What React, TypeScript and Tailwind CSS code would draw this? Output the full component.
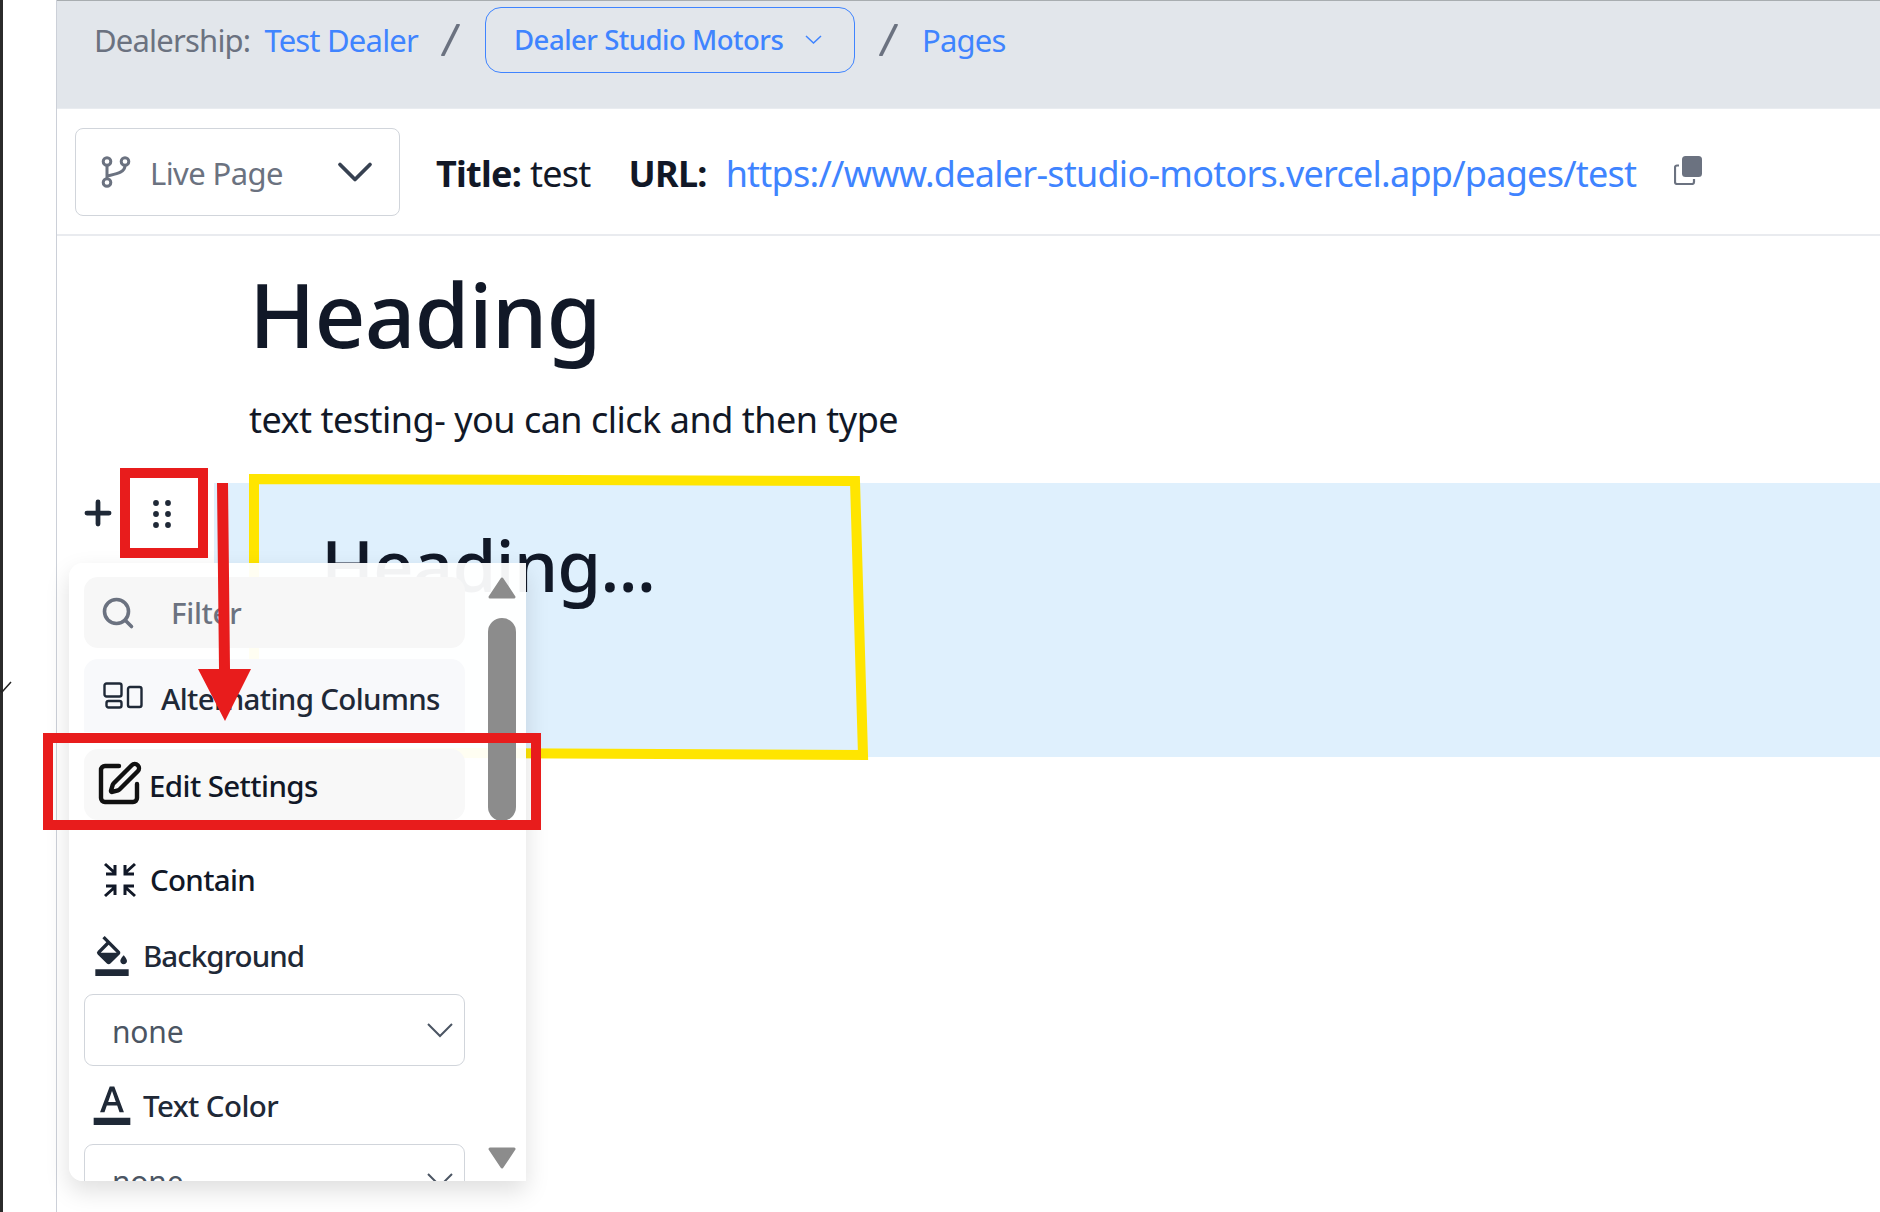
import { ChevronDown, Plus, Search, SquarePen } from "lucide-react";
import { MdFormatColorFill, MdFormatColorText } from "react-icons/md";

const font = "font-['Noto_Sans','Open_Sans',sans-serif]";

function Slash() {
  return (
    <svg width="19" height="32" viewBox="0 0 19 32" className="shrink-0">
      <path d="M17 1 L2 31" stroke="#6b7280" strokeWidth="3.6" strokeLinecap="round" />
    </svg>
  );
}

function BranchIcon() {
  return (
    <svg width="30" height="32" viewBox="0 0 30 32" fill="none" stroke="#6b7280" strokeWidth="3" className="shrink-0">
      <circle cx="6" cy="5.5" r="3.8" />
      <circle cx="24" cy="5.5" r="3.8" />
      <circle cx="6" cy="26.5" r="3.8" />
      <path d="M6 9.5 V22.5 M24 9.5 C24 17 14 18 6 20" />
    </svg>
  );
}

function ColumnsIcon() {
  return (
    <svg width="40" height="27" viewBox="0 0 40 27" fill="none" stroke="#1f2937" strokeWidth="2.4" className="shrink-0">
      <rect x="1.5" y="1.5" width="17" height="13" rx="2" />
      <rect x="3.5" y="19" width="15" height="6.5" rx="2" />
      <rect x="25" y="5" width="13.5" height="20" rx="2" />
    </svg>
  );
}

function ContainIcon() {
  return (
    <svg width="34" height="36" viewBox="0 0 34 36" fill="none" stroke="#111827" strokeWidth="3" className="shrink-0">
      <path d="M2 2 L12 11 M3 12 H12 V3" />
      <path d="M32 2 L22 11 M31 12 H22 V3" />
      <path d="M2 34 L12 25 M3 24 H12 V33" />
      <path d="M32 34 L22 25 M31 24 H22 V33" />
    </svg>
  );
}

function CopyIcon() {
  return (
    <svg width="28" height="29" viewBox="0 0 28 29" fill="none" className="shrink-0">
      <path d="M5 9.5 H3 a2 2 0 0 0 -2 2 V26 a2 2 0 0 0 2 2 H18 a2 2 0 0 0 2 -2 V23" stroke="#6b7280" strokeWidth="2.2" />
      <rect x="8" y="0" width="20" height="21" rx="3.5" fill="#6b7280" />
    </svg>
  );
}

function GripDots() {
  return (
    <svg width="18" height="28" viewBox="0 0 18 28" fill="#1f2937">
      {[3, 14, 25].map((y) => (
        <g key={y}>
          <circle cx="3" cy={y} r="2.9" />
          <circle cx="15" cy={y} r="2.9" />
        </g>
      ))}
    </svg>
  );
}

function NoneSelect() {
  return (
    <div className="flex items-center justify-between h-[72px] shrink-0 pl-[27px] pr-[11px] bg-white border border-[#d1d5db] rounded-[9px]">
      <span className="text-[30px] text-[#4b5563] pt-[3px] tracking-[-0.2px]">none</span>
      <svg width="26" height="15" viewBox="0 0 26 15" fill="none" stroke="#4b5563" strokeWidth="2">
        <path d="M1 1 L13 13 L25 1" />
      </svg>
    </div>
  );
}

export default function App() {
  return (
    <div className={`relative flex w-[1880px] h-[1212px] overflow-hidden bg-white ${font}`}>
      {/* sidebar strip */}
      <div className="relative w-[57px] shrink-0 bg-white border-l-[3px] border-l-[#2b2b2b] border-r border-r-[#ccd0d8]">
        <svg width="12" height="12" viewBox="0 0 12 12" className="absolute left-[-3px] top-[681px]" fill="none" stroke="#222" strokeWidth="1.5">
          <path d="M0 10 L2 11 L11 1" />
        </svg>
      </div>

      <div className="flex flex-col flex-1 min-w-0 border-t border-t-[#a8adb0]">
        {/* breadcrumb */}
        <div className="flex items-start h-[108px] shrink-0 pl-[37px] pt-[6px] bg-[#e2e6eb] border-b border-b-[#e9ecf0]">
          <div className="flex items-center h-[65px] text-[31px] whitespace-nowrap">
            <span className="pt-[1px] text-[#6b7280] tracking-[-0.8px]">Dealership:</span>
            <span className="ml-[14px] pt-[1px] text-[#3f84ff] tracking-[-0.8px]">Test Dealer</span>
            <span className="ml-[23px]"><Slash /></span>
            <div className="flex items-center justify-between w-[370px] h-[66px] ml-[25px] pl-[28px] pr-[32px] border border-[#3f84ff] rounded-[16px]">
              <span className="text-[27.5px] font-medium text-[#3f84ff] tracking-[-0.5px]">Dealer Studio Motors</span>
              <svg width="17" height="9" viewBox="0 0 17 9" fill="none" stroke="#3f84ff" strokeWidth="1.5">
                <path d="M1 1 L8.5 8 L16 1" />
              </svg>
            </div>
            <span className="ml-[24px]"><Slash /></span>
            <span className="ml-[24px] pt-[1px] text-[#3f84ff] tracking-[-0.8px]">Pages</span>
          </div>
        </div>

        {/* page toolbar */}
        <div className="flex items-center h-[127px] shrink-0 pl-[18px] border-b-2 border-b-[#e9ebef]">
          <div className="flex items-center w-[325px] h-[88px] pl-[25px] pr-[28px] border border-[#d1d5db] rounded-[8px]">
            <BranchIcon />
            <span className="ml-[19px] pt-[3px] text-[31px] text-[#6b7280] tracking-[-0.6px]">Live Page</span>
            <ChevronDown size={60} strokeWidth={1.5} className="ml-auto mr-[-14px] text-[#374151] shrink-0" />
          </div>
          <div className="flex items-center ml-[36px] pt-[4px] text-[36px] text-[#111827] whitespace-nowrap tracking-[-0.75px]">
            <b className="font-bold">Title:</b>
            <span className="ml-[9px]">test</span>
            <b className="ml-[38px] font-bold">URL:</b>
            <span className="ml-[19px] text-[#3f84ff]">https://www.dealer-studio-motors.vercel.app/pages/test</span>
            <span className="ml-[38px] mt-[-7px]"><CopyIcon /></span>
          </div>
        </div>

        {/* page body */}
        <div className="flex flex-col flex-1">
          <h1 className="ml-[192px] mt-[20px] text-[89px] leading-[116px] font-medium text-[#111827] tracking-[-1px]">Heading</h1>
          <p className="ml-[192px] mt-[25px] text-[36px] leading-[46px] text-[#111827] tracking-[-0.5px]">text testing- you can click and then type</p>
          <div className="ml-[157px] mt-[40px] h-[274px] bg-[#dff0fd] pl-[107px] pt-[38px]">
            <div className="text-[71px] leading-[88px] font-medium text-[#111827] tracking-[-1px]">Heading...</div>
          </div>
        </div>
      </div>

      {/* hand drawn yellow box */}
      <svg width="640" height="300" viewBox="0 0 640 300" className="absolute left-[240px] top-[465px]" fill="none">
        <path d="M14 270 L14 14 L615 16 L623 290 L20 287" stroke="#ffe500" strokeWidth="10" />
      </svg>

      {/* block controls */}
      <Plus size={38} strokeWidth={3} className="absolute left-[79px] top-[494px] text-[#1f2937]" />
      <div className="absolute left-[153px] top-[500px]"><GripDots /></div>

      {/* block menu */}
      <div className="absolute left-[69px] top-[563px] flex w-[457px] h-[618px] overflow-hidden bg-white/95 rounded-[14px] rounded-r-none shadow-[0_10px_24px_rgba(0,0,0,0.13)]">
        <div className="flex flex-col w-[396px] shrink-0 pl-[15px] pt-[14px]">
          <div className="flex items-center w-[381px] h-[71px] shrink-0 pl-[19px] bg-[#f7f7f7] rounded-[14px]">
            <Search size={36} strokeWidth={2.4} className="text-[#6b7280] ml-[-3px] shrink-0" />
            <span className="ml-[35px] pt-[2px] text-[29.5px] text-[#6b7280] font-medium tracking-[-0.3px]">Filter</span>
          </div>
          <div className="flex items-center w-[381px] h-[73px] mt-[11px] shrink-0 pl-[19px] bg-[#f8f9fb] rounded-t-[14px]">
            <ColumnsIcon />
            <span className="ml-[18px] pt-[8px] text-[29.5px] font-medium text-[#1f2937] tracking-[-0.65px] whitespace-nowrap">Alternating Columns</span>
          </div>
          <div className="flex items-center w-[381px] h-[71px] mt-[17px] shrink-0 pl-[12px] bg-[#f8f8f8] rounded-[14px]">
            <SquarePen size={48} strokeWidth={2.2} className="text-[#111] shrink-0 mt-[-1px] ml-[-1px]" />
            <span className="ml-[6px] pt-[4px] text-[29.5px] font-medium text-[#111827] tracking-[-0.6px]">Edit Settings</span>
          </div>
          <div className="flex items-center h-[36px] mt-[42px] shrink-0 pl-[19px]">
            <ContainIcon />
            <span className="ml-[13px] text-[29.5px] font-medium text-[#111827] tracking-[-0.7px]">Contain</span>
          </div>
          <div className="flex items-center h-[36px] mt-[40px] shrink-0 pl-[8px]">
            <MdFormatColorFill size={40} className="text-[#1f2937] shrink-0" />
            <span className="ml-[11px] text-[29.5px] font-medium text-[#1f2937] tracking-[-0.95px]">Background</span>
          </div>
          <div className="w-[381px] mt-[20px] shrink-0"><NoneSelect /></div>
          <div className="flex items-center h-[36px] mt-[22px] shrink-0 pl-[6px]">
            <MdFormatColorText size={44} className="text-[#1f2937] shrink-0 mt-[-6px]" />
            <span className="ml-[9px] text-[29.5px] font-medium text-[#1f2937] tracking-[-0.6px]">Text Color</span>
          </div>
          <div className="w-[381px] mt-[20px] shrink-0"><NoneSelect /></div>
        </div>
        {/* scrollbar */}
        <div className="flex flex-col items-center w-[28px] ml-[23px] shrink-0 pt-[14px]">
          <svg width="28" height="22" viewBox="0 0 28 22" fill="#8c8c8c">
            <path d="M14 2 L26 20 H2 Z" stroke="#8c8c8c" strokeWidth="3" strokeLinejoin="round" />
          </svg>
          <div className="w-[28px] h-[203px] mt-[19px] bg-[#8c8c8c] rounded-[14px]" />
          <svg width="28" height="22" viewBox="0 0 28 22" fill="#8c8c8c" className="mt-[326px]">
            <path d="M14 20 L26 2 H2 Z" stroke="#8c8c8c" strokeWidth="3" strokeLinejoin="round" />
          </svg>
        </div>
      </div>

      {/* red annotations */}
      <div className="absolute left-[120px] top-[468px] w-[88px] h-[90px] border-[10px] border-[#e81c1c]" />
      <div className="absolute left-[43px] top-[733px] w-[498px] h-[97px] border-[10px] border-[#e81c1c]" />
      <svg width="60" height="240" viewBox="0 0 60 240" className="absolute left-[195px] top-[483px]" fill="#e81c1c">
        <path d="M22 0 H33 L35 186 H56 L30 238 L3 186 H24 Z" />
      </svg>
    </div>
  );
}
